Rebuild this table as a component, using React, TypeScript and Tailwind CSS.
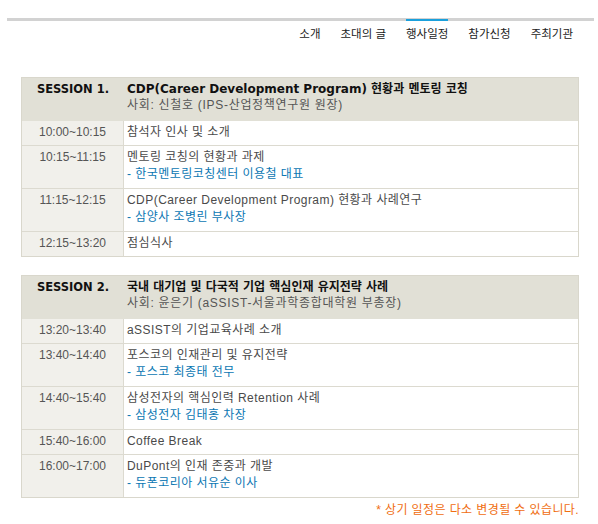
const body = '[font-family:"Liberation_Sans","Noto_Sans_CJK_KR",sans-serif]';

type Row = { time: string; title: string; speaker?: string };

const session1: Row[] = [
  { time: '10:00~10:15', title: '참석자 인사 및 소개' },
  { time: '10:15~11:15', title: '멘토링 코칭의 현황과 과제', speaker: '- 한국멘토링코칭센터 이용철 대표' },
  { time: '11:15~12:15', title: 'CDP(Career Development Program) 현황과 사례연구', speaker: '- 삼양사 조병린 부사장' },
  { time: '12:15~13:20', title: '점심식사' },
];

const session2: Row[] = [
  { time: '13:20~13:40', title: 'aSSIST의 기업교육사례 소개' },
  { time: '13:40~14:40', title: '포스코의 인재관리 및 유지전략', speaker: '- 포스코 최종태 전무' },
  { time: '14:40~15:40', title: '삼성전자의 핵심인력 Retention 사례', speaker: '- 삼성전자 김태홍 차장' },
  { time: '15:40~16:00', title: 'Coffee Break' },
  { time: '16:00~17:00', title: 'DuPont의 인재 존중과 개발', speaker: '- 듀폰코리아 서유순 이사' },
];

const navItems = ['소개', '초대의 글', '행사일정', '참가신청', '주최기관'];

function SessionTable({ no, title, host, rows }: { no: string; title: string; host: string; rows: Row[] }) {
  return (
    <div className="w-[558px] border border-[#d9d7cc]">
      {/* header */}
      <div className="flex h-[43px] bg-[#e1e0d6]">
        <div className="w-[102px] pt-[3px] text-center leading-[16px] text-[11.5px] font-bold text-[#111] [font-family:'DejaVu_Sans',sans-serif]">
          {no}
        </div>
        <div className="pl-[3px] pt-[3px] leading-[16px]">
          <div className="text-[12px] font-bold text-[#111] [font-family:'DejaVu_Sans','Noto_Sans_CJK_KR',sans-serif]">{title}</div>
          <div className={`${body} text-[12px] tracking-[0.7px] text-[#555]`}>{host}</div>
        </div>
      </div>
      {rows.map((r, i) => (
        <div
          key={r.time}
          className={`flex ${i > 0 ? 'border-t border-[#dcdad0]' : ''} ${r.speaker ? 'h-[43px]' : i > 0 ? 'h-[25px]' : 'h-[24px]'}`}
        >
          <div className={`${body} w-[102px] shrink-0 bg-[#f1f0eb] border-r border-[#dcdad0] pt-[3px] text-center text-[12px] leading-[17px] text-[#555]`}>
            {r.time}
          </div>
          <div className={`${body} flex-1 bg-white pl-[3px] pt-[3px] text-[12px] tracking-[0.45px] leading-[17px] text-[#4a4a4a]`}>
            <div>{r.title}</div>
            {r.speaker && <div className="text-[#0b77b3]">{r.speaker}</div>}
          </div>
        </div>
      ))}
    </div>
  );
}

export default function App() {
  return (
    <div className="w-[598px] h-[524px] bg-white overflow-hidden pt-[18px]">
      {/* top nav */}
      <div className="mx-[7px] w-[587px] border-t-[3px] border-[#d2d2d2]">
        <nav className={`${body} flex justify-end gap-[20px] pr-[21px] text-[11.5px] text-[#222]`}>
          {navItems.map((n) => (
            <div
              key={n}
              className={`pt-[4px] leading-[18px] ${n === '행사일정' ? '-mt-[2px] border-t-[2px] border-[#1aa0dc] pt-[4px]' : ''}`}
            >
              {n}
            </div>
          ))}
        </nav>
      </div>

      <div className="flex flex-col pl-[21px] pt-[34px] gap-[18px]">
        <SessionTable
          no="SESSION 1."
          title="CDP(Career Development Program) 현황과 멘토링 코칭"
          host="사회: 신철호 (IPS-산업정책연구원 원장)"
          rows={session1}
        />
        <SessionTable
          no="SESSION 2."
          title="국내 대기업 및 다국적 기업 핵심인재 유지전략 사례"
          host="사회: 윤은기 (aSSIST-서울과학종합대학원 부총장)"
          rows={session2}
        />
      </div>
      <div className={`${body} w-[579px] pt-[3px] text-right text-[12px] tracking-[0.4px] leading-[18px] text-[#f06d10]`}>
        * 상기 일정은 다소 변경될 수 있습니다.
      </div>
    </div>
  );
}
